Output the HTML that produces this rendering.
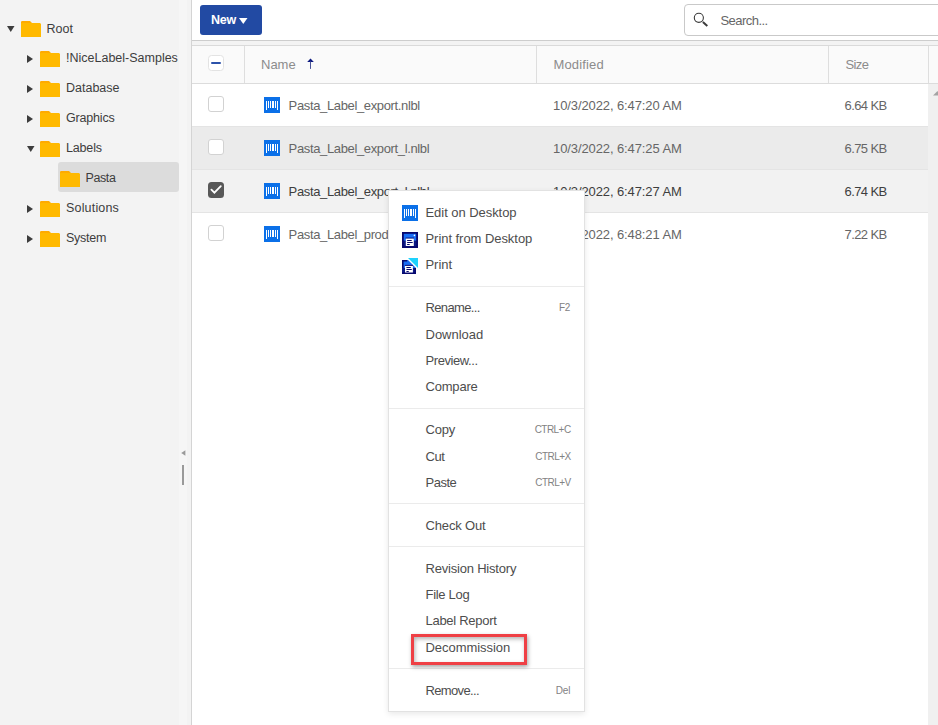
<!DOCTYPE html>
<html><head><meta charset="utf-8"><title>Files</title>
<style>
*{box-sizing:border-box;margin:0;padding:0}
html,body{width:938px;height:725px;overflow:hidden;background:#fff;font-family:"Liberation Sans", sans-serif;font-size:13px;position:relative}
.abs{position:absolute;display:block}
.t{position:absolute;white-space:nowrap;line-height:16px;height:16px}
</style></head><body>
<div class="abs" style="left:0;top:0;width:191px;height:725px;background:#f3f3f3"></div>
<div class="abs" style="left:179px;top:0;width:8px;height:725px;background:#f6f6f6"></div>
<div class="abs" style="left:191px;top:0;width:1px;height:725px;background:#d4d4d4"></div>
<svg class="abs" style="left:180.5px;top:449.5px" width="5" height="6" viewBox="0 0 5 6"><path d="M0.2 3 L4.4 0.2 V5.8 Z" fill="#9a9a9a"/></svg>
<div class="abs" style="left:182px;top:465px;width:2px;height:20px;background:#9a9a9a"></div>
<svg class="abs" style="left:7px;top:26px" width="7.5" height="6" viewBox="0 0 7.5 6"><path d="M0 0 H7.5 L3.75 6 Z" fill="#3c3c3c"/></svg>
<svg class="abs" style="left:21px;top:21px" width="20" height="16" viewBox="0 0 20 16"><path d="M0 1.2 Q0 0 1.2 0 H9 L11 2.1 H0 Z" fill="#ffab00"/><path d="M0 2 H19 L20 3 V16 H0 Z" fill="#ffb900"/></svg>
<span class="t" style="left:46.5px;top:20.67px;font-size:12.5px;color:#3d3d3d;letter-spacing:0px;font-weight:normal;">Root</span>
<svg class="abs" style="left:27px;top:55px" width="6" height="8" viewBox="0 0 6 8"><path d="M0 0 L6 4.0 L0 8 Z" fill="#3c3c3c"/></svg>
<svg class="abs" style="left:40px;top:51px" width="20" height="16" viewBox="0 0 20 16"><path d="M0 1.2 Q0 0 1.2 0 H9 L11 2.1 H0 Z" fill="#ffab00"/><path d="M0 2 H19 L20 3 V16 H0 Z" fill="#ffb900"/></svg>
<span class="t" style="left:66px;top:49.67px;font-size:12.5px;color:#3d3d3d;letter-spacing:0px;font-weight:normal;">!NiceLabel-Samples</span>
<svg class="abs" style="left:27px;top:85px" width="6" height="8" viewBox="0 0 6 8"><path d="M0 0 L6 4.0 L0 8 Z" fill="#3c3c3c"/></svg>
<svg class="abs" style="left:40px;top:81px" width="20" height="16" viewBox="0 0 20 16"><path d="M0 1.2 Q0 0 1.2 0 H9 L11 2.1 H0 Z" fill="#ffab00"/><path d="M0 2 H19 L20 3 V16 H0 Z" fill="#ffb900"/></svg>
<span class="t" style="left:66px;top:79.67px;font-size:12.5px;color:#3d3d3d;letter-spacing:0px;font-weight:normal;">Database</span>
<svg class="abs" style="left:27px;top:115px" width="6" height="8" viewBox="0 0 6 8"><path d="M0 0 L6 4.0 L0 8 Z" fill="#3c3c3c"/></svg>
<svg class="abs" style="left:40px;top:111px" width="20" height="16" viewBox="0 0 20 16"><path d="M0 1.2 Q0 0 1.2 0 H9 L11 2.1 H0 Z" fill="#ffab00"/><path d="M0 2 H19 L20 3 V16 H0 Z" fill="#ffb900"/></svg>
<span class="t" style="left:66px;top:109.67px;font-size:12.5px;color:#3d3d3d;letter-spacing:-0.18px;font-weight:normal;">Graphics</span>
<svg class="abs" style="left:27px;top:146px" width="7.5" height="6" viewBox="0 0 7.5 6"><path d="M0 0 H7.5 L3.75 6 Z" fill="#3c3c3c"/></svg>
<svg class="abs" style="left:40px;top:141px" width="20" height="16" viewBox="0 0 20 16"><path d="M0 1.2 Q0 0 1.2 0 H9 L11 2.1 H0 Z" fill="#ffab00"/><path d="M0 2 H19 L20 3 V16 H0 Z" fill="#ffb900"/></svg>
<span class="t" style="left:66px;top:139.67px;font-size:12.5px;color:#3d3d3d;letter-spacing:-0.17px;font-weight:normal;">Labels</span>
<div class="abs" style="left:58px;top:162px;width:121px;height:30px;background:#dcdcdc;border-radius:3px"></div>
<svg class="abs" style="left:60px;top:171px" width="20" height="16" viewBox="0 0 20 16"><path d="M0 1.2 Q0 0 1.2 0 H9 L11 2.1 H0 Z" fill="#ffab00"/><path d="M0 2 H19 L20 3 V16 H0 Z" fill="#ffb900"/></svg>
<span class="t" style="left:85.5px;top:169.67px;font-size:12.5px;color:#3d3d3d;letter-spacing:-0.4px;font-weight:normal;">Pasta</span>
<svg class="abs" style="left:27px;top:205px" width="6" height="8" viewBox="0 0 6 8"><path d="M0 0 L6 4.0 L0 8 Z" fill="#3c3c3c"/></svg>
<svg class="abs" style="left:40px;top:201px" width="20" height="16" viewBox="0 0 20 16"><path d="M0 1.2 Q0 0 1.2 0 H9 L11 2.1 H0 Z" fill="#ffab00"/><path d="M0 2 H19 L20 3 V16 H0 Z" fill="#ffb900"/></svg>
<span class="t" style="left:66px;top:199.67px;font-size:12.5px;color:#3d3d3d;letter-spacing:0.18px;font-weight:normal;">Solutions</span>
<svg class="abs" style="left:27px;top:235px" width="6" height="8" viewBox="0 0 6 8"><path d="M0 0 L6 4.0 L0 8 Z" fill="#3c3c3c"/></svg>
<svg class="abs" style="left:40px;top:231px" width="20" height="16" viewBox="0 0 20 16"><path d="M0 1.2 Q0 0 1.2 0 H9 L11 2.1 H0 Z" fill="#ffab00"/><path d="M0 2 H19 L20 3 V16 H0 Z" fill="#ffb900"/></svg>
<span class="t" style="left:66px;top:229.67px;font-size:12.5px;color:#3d3d3d;letter-spacing:-0.25px;font-weight:normal;">System</span>
<div class="abs" style="left:192px;top:0;width:746px;height:40px;background:#fff"></div>
<div class="abs" style="left:192px;top:40px;width:746px;height:1px;background:#cdcdcd"></div>
<div class="abs" style="left:192px;top:41px;width:746px;height:4px;background:#f3f3f3"></div>
<div class="abs" style="left:200px;top:5px;width:62px;height:30px;background:#224aa3;border-radius:3px"></div>
<span class="t" style="left:211px;top:11.67px;font-size:12.5px;color:#fff;letter-spacing:-0.3px;font-weight:bold;">New</span>
<svg class="abs" style="left:239.2px;top:18px" width="8.5" height="6" viewBox="0 0 8.5 6"><path d="M0 0 H8.5 L4.25 6 Z" fill="#fff"/></svg>
<div class="abs" style="left:684px;top:4px;width:270px;height:32px;border:1px solid #c9c9c9;border-radius:4px;background:#fff"></div>
<svg class="abs" style="left:692px;top:11px" width="18" height="18" viewBox="0 0 18 18"><circle cx="6.85" cy="6.85" r="4.55" fill="none" stroke="#3a3a3a" stroke-width="1.1"/><path d="M10.9 11.1 L15.3 15.1" stroke="#3a3a3a" stroke-width="2" stroke-linecap="butt"/></svg>
<span class="t" style="left:720.5px;top:12.50px;font-size:13px;color:#666;letter-spacing:-0.55px;font-weight:normal;">Search...</span>
<div class="abs" style="left:192px;top:45px;width:746px;height:1px;background:#dadada"></div>
<div class="abs" style="left:192px;top:46px;width:746px;height:37px;background:#fafafa"></div>
<div class="abs" style="left:192px;top:83px;width:746px;height:1px;background:#dcdcdc"></div>
<div class="abs" style="left:244px;top:46px;width:1px;height:37px;background:#dedede"></div>
<div class="abs" style="left:536px;top:46px;width:1px;height:37px;background:#dedede"></div>
<div class="abs" style="left:828px;top:46px;width:1px;height:37px;background:#dedede"></div>
<div class="abs" style="left:928px;top:46px;width:1px;height:37px;background:#dedede"></div>
<div class="abs" style="left:208px;top:55px;width:16px;height:16px;border:1px solid #e3e3e3;border-radius:3.5px;background:#fff"></div>
<div class="abs" style="left:211px;top:62px;width:9.6px;height:2px;background:#2c52aa;border-radius:1px"></div>
<span class="t" style="left:261px;top:56.50px;font-size:13px;color:#8c8c8c;letter-spacing:0px;font-weight:normal;">Name</span>
<svg class="abs" style="left:306.5px;top:57.5px" width="7" height="12" viewBox="0 0 7 12"><path d="M3.5 0.5 L6.8 4 H0.2 Z" fill="#0d1a80"/><rect x="3" y="3.5" width="1" height="7.4" fill="#4a5598"/></svg>
<span class="t" style="left:553.5px;top:56.50px;font-size:13px;color:#8c8c8c;letter-spacing:0.15px;font-weight:normal;">Modified</span>
<span class="t" style="left:845.5px;top:56.50px;font-size:13px;color:#8c8c8c;letter-spacing:-0.6px;font-weight:normal;">Size</span>
<div class="abs" style="left:192px;top:84px;width:736px;height:43px;background:#ffffff"></div>
<div class="abs" style="left:192px;top:126px;width:736px;height:1px;background:#e4e4e4"></div>
<div class="abs" style="left:208px;top:96px;width:16px;height:16px;border:1.5px solid #d2d2d2;border-radius:3px;background:#fff"></div>
<svg class="abs" style="left:264px;top:97px" width="16" height="16" viewBox="0 0 16 16" shape-rendering="crispEdges"><rect width="16" height="16" fill="#0b70e8"/><g fill="#fff"><rect x="2" y="4" width="1" height="9"/><rect x="4" y="4" width="1" height="7"/><rect x="6" y="4" width="1" height="7"/><rect x="8" y="4" width="2" height="7"/><rect x="11" y="4" width="1" height="7"/><rect x="13" y="4" width="1" height="9"/></g></svg>
<span class="t" style="left:288.6px;top:97.50px;font-size:13px;color:#666666;letter-spacing:-0.36px;font-weight:normal;">Pasta_Label_export.nlbl</span>
<span class="t" style="left:553px;top:97.50px;font-size:13px;color:#666666;letter-spacing:-0.1px;font-weight:normal;">10/3/2022, 6:47:20 AM</span>
<span class="t" style="left:844.5px;top:97.50px;font-size:13px;color:#666666;letter-spacing:-0.6px;font-weight:normal;">6.64 KB</span>
<div class="abs" style="left:192px;top:127px;width:736px;height:43px;background:#ebebeb"></div>
<div class="abs" style="left:192px;top:169px;width:736px;height:1px;background:#e4e4e4"></div>
<div class="abs" style="left:208px;top:139px;width:16px;height:16px;border:1.5px solid #d2d2d2;border-radius:3px;background:#fff"></div>
<svg class="abs" style="left:264px;top:140px" width="16" height="16" viewBox="0 0 16 16" shape-rendering="crispEdges"><rect width="16" height="16" fill="#0b70e8"/><g fill="#fff"><rect x="2" y="4" width="1" height="9"/><rect x="4" y="4" width="1" height="7"/><rect x="6" y="4" width="1" height="7"/><rect x="8" y="4" width="2" height="7"/><rect x="11" y="4" width="1" height="7"/><rect x="13" y="4" width="1" height="9"/></g></svg>
<span class="t" style="left:288.6px;top:140.50px;font-size:13px;color:#666666;letter-spacing:-0.36px;font-weight:normal;">Pasta_Label_export_l.nlbl</span>
<span class="t" style="left:553px;top:140.50px;font-size:13px;color:#666666;letter-spacing:-0.1px;font-weight:normal;">10/3/2022, 6:47:25 AM</span>
<span class="t" style="left:844.5px;top:140.50px;font-size:13px;color:#666666;letter-spacing:-0.6px;font-weight:normal;">6.75 KB</span>
<div class="abs" style="left:192px;top:170px;width:736px;height:43px;background:#f2f2f2"></div>
<div class="abs" style="left:192px;top:212px;width:736px;height:1px;background:#e4e4e4"></div>
<div class="abs" style="left:208px;top:182px;width:16px;height:16px;background:#585858;border-radius:3.5px"></div>
<svg class="abs" style="left:208px;top:182px" width="16" height="16" viewBox="0 0 16 16"><path d="M3.4 7.6 L6.4 10.7 L12.8 4.2" fill="none" stroke="#fff" stroke-width="1.8" stroke-linecap="round"/></svg>
<svg class="abs" style="left:264px;top:183px" width="16" height="16" viewBox="0 0 16 16" shape-rendering="crispEdges"><rect width="16" height="16" fill="#0b70e8"/><g fill="#fff"><rect x="2" y="4" width="1" height="9"/><rect x="4" y="4" width="1" height="7"/><rect x="6" y="4" width="1" height="7"/><rect x="8" y="4" width="2" height="7"/><rect x="11" y="4" width="1" height="7"/><rect x="13" y="4" width="1" height="9"/></g></svg>
<span class="t" style="left:288.6px;top:183.50px;font-size:13px;color:#3e3e3e;letter-spacing:-0.36px;font-weight:normal;">Pasta_Label_export_l.nlbl</span>
<span class="t" style="left:553px;top:183.50px;font-size:13px;color:#3e3e3e;letter-spacing:-0.1px;font-weight:normal;">10/3/2022, 6:47:27 AM</span>
<span class="t" style="left:844.5px;top:183.50px;font-size:13px;color:#3e3e3e;letter-spacing:-0.6px;font-weight:normal;">6.74 KB</span>
<div class="abs" style="left:192px;top:213px;width:736px;height:43px;background:#ffffff"></div>
<div class="abs" style="left:208px;top:225px;width:16px;height:16px;border:1.5px solid #d2d2d2;border-radius:3px;background:#fff"></div>
<svg class="abs" style="left:264px;top:226px" width="16" height="16" viewBox="0 0 16 16" shape-rendering="crispEdges"><rect width="16" height="16" fill="#0b70e8"/><g fill="#fff"><rect x="2" y="4" width="1" height="9"/><rect x="4" y="4" width="1" height="7"/><rect x="6" y="4" width="1" height="7"/><rect x="8" y="4" width="2" height="7"/><rect x="11" y="4" width="1" height="7"/><rect x="13" y="4" width="1" height="9"/></g></svg>
<span class="t" style="left:288.6px;top:226.50px;font-size:13px;color:#666666;letter-spacing:-0.36px;font-weight:normal;">Pasta_Label_production.nlbl</span>
<span class="t" style="left:553px;top:226.50px;font-size:13px;color:#666666;letter-spacing:-0.1px;font-weight:normal;">10/3/2022, 6:48:21 AM</span>
<span class="t" style="left:844.5px;top:226.50px;font-size:13px;color:#666666;letter-spacing:-0.6px;font-weight:normal;">7.22 KB</span>
<div class="abs" style="left:928px;top:84px;width:10px;height:641px;background:#f0f0f0"></div>
<svg class="abs" style="left:932.5px;top:90.5px" width="9" height="5" viewBox="0 0 9 5"><path d="M0 4.6 L4.5 0 L9 4.6 Z" fill="#a3a3a3"/></svg>
<div class="abs" style="left:388px;top:190px;width:197px;height:522px;background:#fff;border:1px solid #e2e2e2;box-shadow:0 2px 6px rgba(0,0,0,0.09)"></div>
<div class="abs" style="left:389px;top:286px;width:195px;height:1px;background:#ebebeb"></div>
<div class="abs" style="left:389px;top:408px;width:195px;height:1px;background:#ebebeb"></div>
<div class="abs" style="left:389px;top:503px;width:195px;height:1px;background:#ebebeb"></div>
<div class="abs" style="left:389px;top:546px;width:195px;height:1px;background:#ebebeb"></div>
<div class="abs" style="left:389px;top:668px;width:195px;height:1px;background:#ebebeb"></div>
<svg class="abs" style="left:402px;top:205px" width="16" height="16" viewBox="0 0 16 16" shape-rendering="crispEdges"><rect width="16" height="16" fill="#0b70e8"/><g fill="#fff"><rect x="2" y="4" width="1" height="9"/><rect x="4" y="4" width="1" height="7"/><rect x="6" y="4" width="1" height="7"/><rect x="8" y="4" width="2" height="7"/><rect x="11" y="4" width="1" height="7"/><rect x="13" y="4" width="1" height="9"/></g></svg>
<span class="t" style="left:425.5px;top:204.50px;font-size:13px;color:#4d4d4d;letter-spacing:-0.05px;font-weight:normal;">Edit on Desktop</span>
<svg class="abs" style="left:402px;top:232px" width="16" height="16" viewBox="0 0 16 16"><rect width="16" height="16" fill="#07086e"/><rect x="1.8" y="1.8" width="12.4" height="7" fill="#1a6ef5"/><rect x="1.8" y="8.8" width="12.4" height="5.4" fill="#0c1a86"/><circle cx="12.4" cy="3.4" r="0.8" fill="#fff"/><rect x="3.6" y="5.6" width="8.4" height="1.2" fill="#07086e"/><rect x="3.8" y="6.6" width="8" height="7.4" fill="#fff"/><rect x="5" y="7.9" width="4.8" height="1" rx="0.5" fill="#07086e"/><rect x="5" y="9.9" width="5.8" height="1" rx="0.5" fill="#07086e"/><rect x="5" y="11.9" width="2.8" height="1" rx="0.5" fill="#07086e"/></svg>
<span class="t" style="left:425.5px;top:230.50px;font-size:13px;color:#4d4d4d;letter-spacing:-0.05px;font-weight:normal;">Print from Desktop</span>
<svg class="abs" style="left:402px;top:258px" width="16" height="16" viewBox="0 0 16 16"><path d="M6 0 H16 V10 Z" fill="#1dd2fd"/><path d="M0 2 H6 L14 10 V16 H0 Z" fill="#1a6ef5"/><rect x="0" y="2" width="1.6" height="14" fill="#07086e"/><rect x="0" y="2" width="5.2" height="1.5" fill="#07086e"/><rect x="0" y="10" width="14" height="6" fill="#0c1a86"/><rect x="0" y="14.4" width="14" height="1.6" fill="#07086e"/><rect x="12.4" y="10" width="1.6" height="6" fill="#07086e"/><rect x="2.9" y="6.9" width="8" height="1.1" fill="#07086e"/><rect x="3" y="7.9" width="7.9" height="6.6" fill="#fff"/><rect x="4.3" y="8.9" width="4.6" height="1" rx="0.5" fill="#07086e"/><rect x="4.3" y="10.9" width="5.6" height="1" rx="0.5" fill="#07086e"/><rect x="4.3" y="12.9" width="2.6" height="1" rx="0.5" fill="#07086e"/></svg>
<span class="t" style="left:425.5px;top:256.50px;font-size:13px;color:#4d4d4d;letter-spacing:-0.05px;font-weight:normal;">Print</span>
<span class="t" style="left:425.5px;top:299.50px;font-size:13px;color:#4d4d4d;letter-spacing:-0.65px;font-weight:normal;">Rename...</span>
<span class="t" style="right:367.8px;top:299.54px;font-size:10px;color:#828282;letter-spacing:-0.2px">F2</span>
<span class="t" style="left:425.5px;top:326.50px;font-size:13px;color:#4d4d4d;letter-spacing:0px;font-weight:normal;">Download</span>
<span class="t" style="left:425.5px;top:352.50px;font-size:13px;color:#4d4d4d;letter-spacing:-0.42px;font-weight:normal;">Preview...</span>
<span class="t" style="left:425.5px;top:378.50px;font-size:13px;color:#4d4d4d;letter-spacing:-0.2px;font-weight:normal;">Compare</span>
<span class="t" style="left:425.5px;top:421.50px;font-size:13px;color:#4d4d4d;letter-spacing:-0.2px;font-weight:normal;">Copy</span>
<span class="t" style="right:367.45px;top:421.54px;font-size:10px;color:#828282;letter-spacing:-0.55px">CTRL+C</span>
<span class="t" style="left:425.5px;top:448.50px;font-size:13px;color:#4d4d4d;letter-spacing:-0.4px;font-weight:normal;">Cut</span>
<span class="t" style="right:367.45px;top:448.54px;font-size:10px;color:#828282;letter-spacing:-0.55px">CTRL+X</span>
<span class="t" style="left:425.5px;top:474.50px;font-size:13px;color:#4d4d4d;letter-spacing:-0.5px;font-weight:normal;">Paste</span>
<span class="t" style="right:367.45px;top:474.54px;font-size:10px;color:#828282;letter-spacing:-0.55px">CTRL+V</span>
<span class="t" style="left:425.5px;top:517.50px;font-size:13px;color:#4d4d4d;letter-spacing:-0.15px;font-weight:normal;">Check Out</span>
<span class="t" style="left:425.5px;top:560.50px;font-size:13px;color:#4d4d4d;letter-spacing:-0.2px;font-weight:normal;">Revision History</span>
<span class="t" style="left:425.5px;top:586.50px;font-size:13px;color:#4d4d4d;letter-spacing:-0.3px;font-weight:normal;">File Log</span>
<span class="t" style="left:425.5px;top:613.00px;font-size:13px;color:#4d4d4d;letter-spacing:-0.28px;font-weight:normal;">Label Report</span>
<span class="t" style="left:425.5px;top:639.50px;font-size:13px;color:#4d4d4d;letter-spacing:-0.05px;font-weight:normal;">Decommission</span>
<span class="t" style="left:425.5px;top:682.50px;font-size:13px;color:#4d4d4d;letter-spacing:-0.65px;font-weight:normal;">Remove...</span>
<span class="t" style="right:367.8px;top:682.53px;font-size:10px;color:#828282;letter-spacing:-0.2px">Del</span>
<div class="abs" style="left:411px;top:634px;width:116px;height:31px;border:3px solid #ef4045;box-shadow:1px 2px 4px rgba(0,0,0,0.35), inset 1px 2px 4px rgba(0,0,0,0.3)"></div>
</body></html>
